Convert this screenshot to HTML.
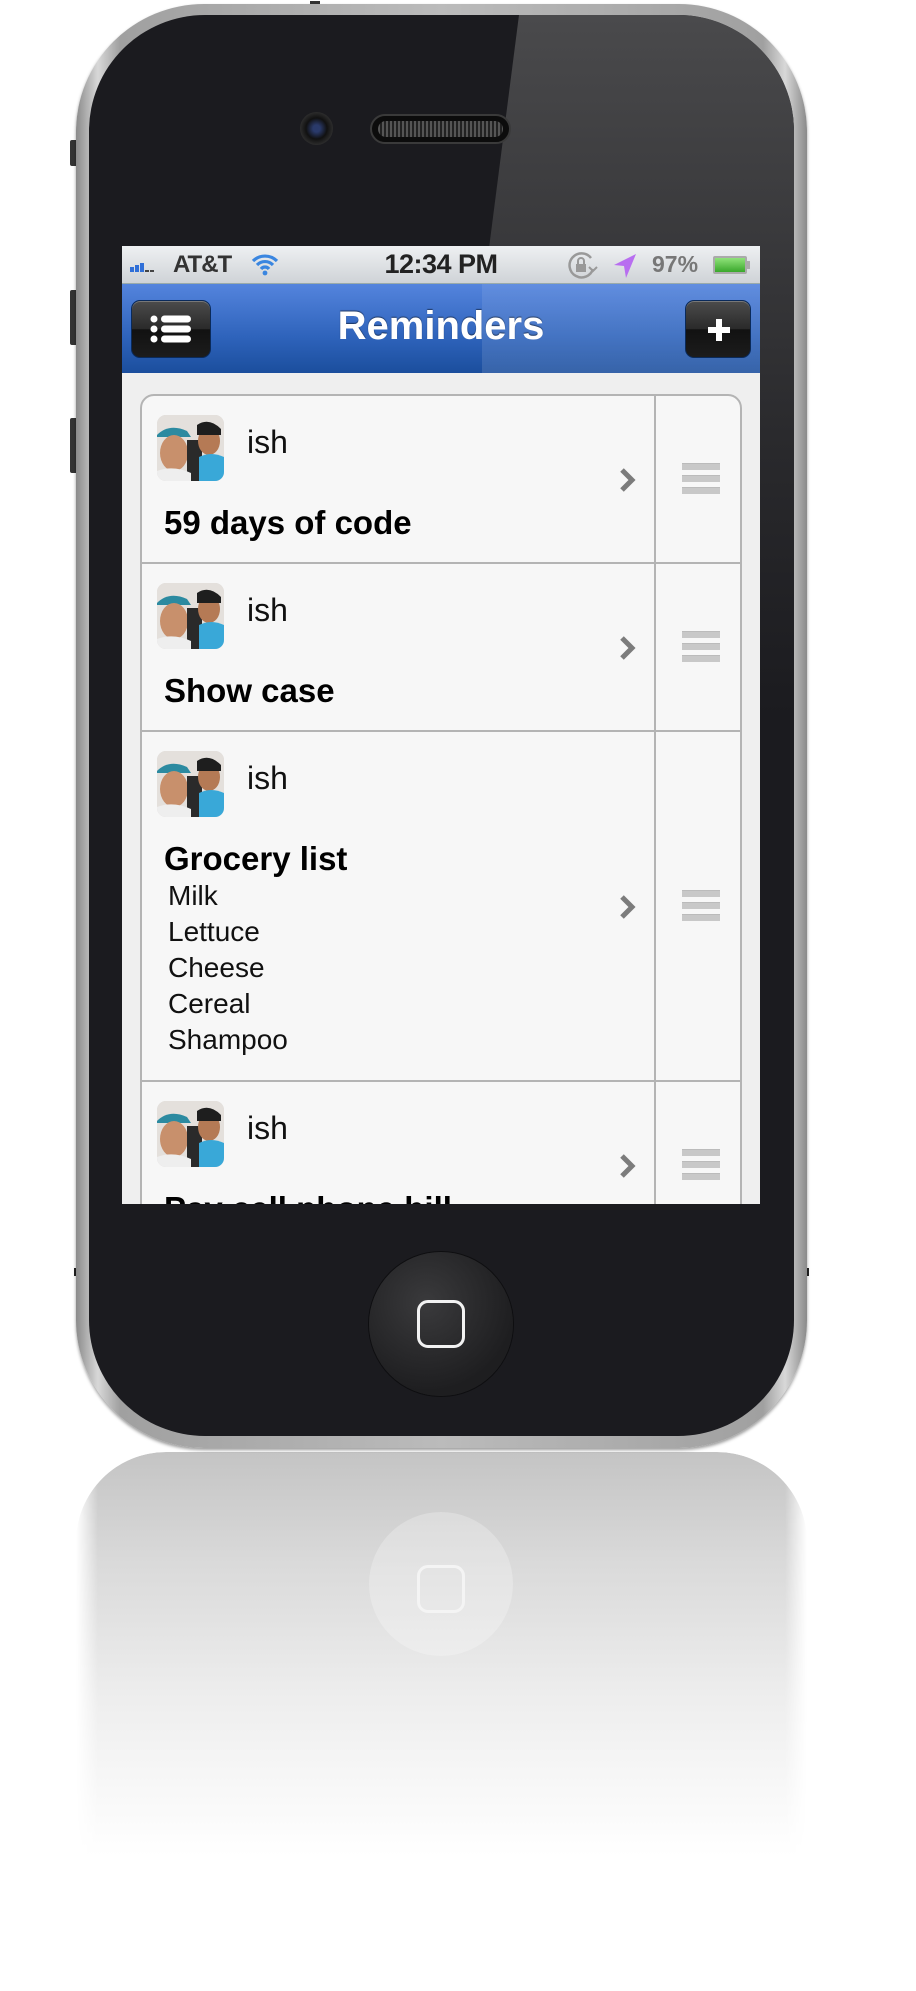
<!DOCTYPE html>
<html><head><meta charset="utf-8"><style>
*{margin:0;padding:0;box-sizing:border-box}
body{width:916px;height:1991px;background:#fff;position:relative;overflow:hidden;font-family:"Liberation Sans",Arial,sans-serif}
.abs{position:absolute}
.phone{left:76px;top:4px;width:731px;height:1444px;border-radius:128px;background:linear-gradient(90deg,#8a8a8a,#d8d8d8 3%,#a0a0a0 6%,#bbb 50%,#a0a0a0 94%,#d8d8d8 97%,#8a8a8a);box-shadow:0 2px 3px rgba(0,0,0,.4)}
.bezel{left:89px;top:15px;width:705px;height:1421px;border-radius:116px;background:#1b1b1f;overflow:hidden}
.glare{left:340px;top:0;width:500px;height:700px;background:linear-gradient(180deg,#4a4a4c,#2a2a2d 60%,#1b1b1f);clip-path:polygon(90px 0,100% 0,100% 100%,0 100%)}
.screen{left:122px;top:246px;width:638px;height:958px;background:#efefef;overflow:hidden}
.status{left:0;top:0;width:638px;height:38px;background:linear-gradient(#eef0f2,#cfd3d7);border-bottom:1px solid #9aa}
.nav{left:0;top:38px;width:638px;height:89px;background:linear-gradient(#5484dd,#2e63bb 60%,#1b4e9d)}
.btn{background:linear-gradient(#4c4c4c,#2a2a2a 50%,#111 51%,#1c1c1c);border:1px solid #0a2a5a;border-radius:9px;box-shadow:inset 0 1px 0 rgba(255,255,255,.25)}
.card{left:18px;top:148px;width:602px;height:900px;background:#f7f7f7;border:2px solid #b4b4b4;border-radius:14px}
.row{position:absolute;left:0;width:598px;border-bottom:2px solid #b4b4b4}
.div{position:absolute;left:512px;top:0;bottom:0;width:2px;background:#b4b4b4}
.av{position:absolute;left:15px;top:19px;width:67px;height:66px;border-radius:9px;overflow:hidden;background:#d8d8d8}
.ish{position:absolute;left:105px;top:28px;font-size:32px;color:#111}
.ttl{position:absolute;left:22px;top:108px;font-size:33px;font-weight:bold;color:#000}
.it{position:absolute;left:26px;font-size:28px;color:#111}
.chev{position:absolute;left:476px;width:20px;height:26px}
.ham{position:absolute;left:540px;width:38px;height:33px}
.ham i{display:block;height:7px;background:#c8c8c8;margin-bottom:5px;border-top:1px solid #bbb}
</style></head><body>
<!-- reflection -->
<div class="abs" style="left:76px;top:1452px;width:731px;height:450px;border-radius:90px 90px 0 0;background:linear-gradient(#c4c4c4,#dadada 25%,#eee 55%,#fff 90%);-webkit-mask-image:linear-gradient(90deg,transparent,#000 3%,#000 97%,transparent)"></div>
<div class="abs" style="left:369px;top:1512px;width:144px;height:144px;border-radius:50%;background:rgba(255,255,255,.25)"></div>
<div class="abs" style="left:417px;top:1565px;width:48px;height:48px;border:3px solid #f4f4f4;border-radius:11px"></div>
<!-- side buttons -->
<div class="abs" style="left:70px;top:140px;width:8px;height:26px;background:#333;border-radius:2px"></div>
<div class="abs" style="left:70px;top:290px;width:8px;height:55px;background:#333;border-radius:2px"></div>
<div class="abs" style="left:70px;top:418px;width:8px;height:55px;background:#333;border-radius:2px"></div>
<div class="abs" style="left:74px;top:1268px;width:6px;height:8px;background:#222"></div>
<div class="abs" style="left:803px;top:1268px;width:6px;height:8px;background:#222"></div>
<div class="abs" style="left:310px;top:1px;width:10px;height:6px;background:#333"></div>
<div class="abs phone"></div>
<div class="abs bezel"><div class="abs glare"></div></div>
<!-- camera & speaker -->
<div class="abs" style="left:300px;top:112px;width:33px;height:33px;border-radius:50%;background:radial-gradient(circle,#2a3a6a 15%,#111 45%,#2c2c2c 70%,#181818)"></div>
<div class="abs" style="left:370px;top:114px;width:141px;height:30px;border-radius:15px;background:#0c0c0c;border:2px solid #3a3a3a"></div>
<div class="abs" style="left:378px;top:121px;width:125px;height:16px;border-radius:8px;background:repeating-linear-gradient(90deg,#555 0 2px,#222 2px 4px)"></div>
<!-- home -->
<div class="abs" style="left:369px;top:1252px;width:144px;height:144px;border-radius:50%;background:radial-gradient(circle at 40% 35%,#3a3a3c,#1e1e20 70%);box-shadow:0 0 0 1px #0e0e10"></div>
<div class="abs" style="left:417px;top:1300px;width:48px;height:48px;border:3px solid #f2f2f2;border-radius:11px"></div>

<div class="abs screen">
 <div class="abs status">
  <div class="abs" style="left:8px;top:14px;width:28px;height:12px">
   <span class="abs" style="left:0;top:7px;width:4px;height:5px;background:#2f6fd8"></span>
   <span class="abs" style="left:5px;top:5px;width:4px;height:7px;background:#2f6fd8"></span>
   <span class="abs" style="left:10px;top:3px;width:4px;height:9px;background:#2f6fd8"></span>
   <span class="abs" style="left:15px;top:10px;width:4px;height:2px;background:#444"></span>
   <span class="abs" style="left:20px;top:10px;width:4px;height:2px;background:#444"></span>
  </div>
  <div class="abs" style="left:51px;top:5px;font-size:24px;font-weight:bold;color:#333;letter-spacing:-1px">AT&amp;T</div>
  <svg class="abs" style="left:128px;top:6px" width="30" height="26" viewBox="0 0 30 26"><path d="M3 9a17 17 0 0 1 24 0M7 13a11 11 0 0 1 16 0M11 17a5 5 0 0 1 8 0" stroke="#3a86e0" stroke-width="3.2" fill="none"/><circle cx="15" cy="21" r="2.4" fill="#3a86e0"/></svg>
  <div class="abs" style="left:0;width:638px;top:3px;text-align:center;font-size:27px;font-weight:bold;color:#222;letter-spacing:-.5px">12:34 PM</div>
  <svg class="abs" style="left:445px;top:5px" width="32" height="30" viewBox="0 0 32 30"><path d="M26 18A12 12 0 1 1 24 7" stroke="#999" stroke-width="2.5" fill="none"/><path d="M22 16l4 4 4-4" stroke="#999" stroke-width="2" fill="none"/><rect x="9" y="13" width="10" height="8" fill="#999"/><path d="M11 13v-3a3 3 0 0 1 6 0v3" stroke="#999" stroke-width="2" fill="none"/></svg>
  <svg class="abs" style="left:490px;top:6px" width="26" height="28" viewBox="0 0 26 28"><path d="M24 2L2 13l10 1 2 12z" fill="#b86ef0"/></svg>
  <div class="abs" style="left:530px;top:5px;font-size:23px;font-weight:bold;color:#777">97%</div>
  <div class="abs" style="left:591px;top:10px;width:34px;height:18px;border:2px solid #aaa;background:linear-gradient(#8fe27a,#3aa82c);border-radius:2px"></div>
  <div class="abs" style="left:625px;top:15px;width:3px;height:8px;background:#aaa"></div>
 </div>
 <div class="abs nav">
  <div class="abs" style="left:360px;top:0;width:278px;height:89px;background:linear-gradient(rgba(255,255,255,.08),rgba(255,255,255,.12))"></div>
  <div class="abs btn" style="left:9px;top:16px;width:80px;height:58px">
   <svg class="abs" style="left:18px;top:14px" width="42" height="28" viewBox="0 0 42 28"><g fill="#fff"><circle cx="4" cy="4" r="3.5"/><circle cx="4" cy="14" r="3.5"/><circle cx="4" cy="24" r="3.5"/><rect x="11" y="0.5" width="30" height="7" rx="3.5"/><rect x="11" y="10.5" width="30" height="7" rx="3.5"/><rect x="11" y="20.5" width="30" height="7" rx="3.5"/></g></svg>
  </div>
  <div class="abs" style="left:0;width:638px;top:20px;text-align:center;font-size:40px;font-weight:bold;color:#fff;text-shadow:0 -1px 1px rgba(0,0,0,.5)">Reminders</div>
  <div class="abs btn" style="left:563px;top:16px;width:66px;height:58px">
   <div class="abs" style="left:22px;top:26px;width:22px;height:6px;background:#fff"></div>
   <div class="abs" style="left:30px;top:18px;width:6px;height:22px;background:#fff"></div>
  </div>
 </div>
 <div class="abs card">
  <div class="row" style="top:0;height:168px"><div class="div"></div>
   <div class="av"><svg width="67" height="66"><rect width="67" height="66" fill="#e4e0dc"/><path d="M0 20q12-12 30-4l4 6H0z" fill="#2c8aa0"/><ellipse cx="17" cy="38" rx="14" ry="18" fill="#c8906c"/><rect x="30" y="25" width="15" height="41" fill="#2a2a2a"/><ellipse cx="52" cy="26" rx="11" ry="14" fill="#b57a55"/><path d="M40 10q12-8 24 4v6H40z" fill="#1e1e1e"/><path d="M42 42q12-6 25 0v24H42z" fill="#39a8d8"/><path d="M0 56q16-6 34 2v8H0z" fill="#eee"/></svg></div>
   <div class="ish">ish</div><div class="ttl">59 days of code</div>
   <svg class="chev" style="top:71px" viewBox="0 0 20 26"><path d="M4 3l10 10-10 10" stroke="#7c7c7c" stroke-width="5" fill="none"/></svg>
   <div class="ham" style="top:67px"><i></i><i></i><i></i></div>
  </div>
  <div class="row" style="top:168px;height:168px"><div class="div"></div>
   <div class="av"><svg width="67" height="66"><rect width="67" height="66" fill="#e4e0dc"/><path d="M0 20q12-12 30-4l4 6H0z" fill="#2c8aa0"/><ellipse cx="17" cy="38" rx="14" ry="18" fill="#c8906c"/><rect x="30" y="25" width="15" height="41" fill="#2a2a2a"/><ellipse cx="52" cy="26" rx="11" ry="14" fill="#b57a55"/><path d="M40 10q12-8 24 4v6H40z" fill="#1e1e1e"/><path d="M42 42q12-6 25 0v24H42z" fill="#39a8d8"/><path d="M0 56q16-6 34 2v8H0z" fill="#eee"/></svg></div>
   <div class="ish">ish</div><div class="ttl">Show case</div>
   <svg class="chev" style="top:71px" viewBox="0 0 20 26"><path d="M4 3l10 10-10 10" stroke="#7c7c7c" stroke-width="5" fill="none"/></svg>
   <div class="ham" style="top:67px"><i></i><i></i><i></i></div>
  </div>
  <div class="row" style="top:336px;height:350px"><div class="div"></div>
   <div class="av"><svg width="67" height="66"><rect width="67" height="66" fill="#e4e0dc"/><path d="M0 20q12-12 30-4l4 6H0z" fill="#2c8aa0"/><ellipse cx="17" cy="38" rx="14" ry="18" fill="#c8906c"/><rect x="30" y="25" width="15" height="41" fill="#2a2a2a"/><ellipse cx="52" cy="26" rx="11" ry="14" fill="#b57a55"/><path d="M40 10q12-8 24 4v6H40z" fill="#1e1e1e"/><path d="M42 42q12-6 25 0v24H42z" fill="#39a8d8"/><path d="M0 56q16-6 34 2v8H0z" fill="#eee"/></svg></div>
   <div class="ish">ish</div><div class="ttl">Grocery list</div>
   <div class="it" style="top:148px">Milk</div>
   <div class="it" style="top:184px">Lettuce</div>
   <div class="it" style="top:220px">Cheese</div>
   <div class="it" style="top:256px">Cereal</div>
   <div class="it" style="top:292px">Shampoo</div>
   <svg class="chev" style="top:162px" viewBox="0 0 20 26"><path d="M4 3l10 10-10 10" stroke="#7c7c7c" stroke-width="5" fill="none"/></svg>
   <div class="ham" style="top:158px"><i></i><i></i><i></i></div>
  </div>
  <div class="row" style="top:686px;height:168px;border-bottom:none"><div class="div"></div>
   <div class="av"><svg width="67" height="66"><rect width="67" height="66" fill="#e4e0dc"/><path d="M0 20q12-12 30-4l4 6H0z" fill="#2c8aa0"/><ellipse cx="17" cy="38" rx="14" ry="18" fill="#c8906c"/><rect x="30" y="25" width="15" height="41" fill="#2a2a2a"/><ellipse cx="52" cy="26" rx="11" ry="14" fill="#b57a55"/><path d="M40 10q12-8 24 4v6H40z" fill="#1e1e1e"/><path d="M42 42q12-6 25 0v24H42z" fill="#39a8d8"/><path d="M0 56q16-6 34 2v8H0z" fill="#eee"/></svg></div>
   <div class="ish">ish</div><div class="ttl">Pay cell phone bill</div>
   <svg class="chev" style="top:71px" viewBox="0 0 20 26"><path d="M4 3l10 10-10 10" stroke="#7c7c7c" stroke-width="5" fill="none"/></svg>
   <div class="ham" style="top:67px"><i></i><i></i><i></i></div>
  </div>
 </div>
</div>
</body></html>
